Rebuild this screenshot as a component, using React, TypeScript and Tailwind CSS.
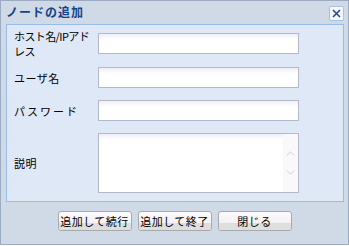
import { ChevronUp, ChevronDown } from 'lucide-react'

const font = { fontFamily: '"Noto Sans CJK JP", "Liberation Sans", sans-serif' }

function Field() {
  return (
    <div className="h-[21px] w-[201px] shrink-0 border border-[#b5b8c8] bg-gradient-to-b from-[#f0eef6] via-white via-[30%] to-white" />
  )
}

function Btn({ label }: { label: string }) {
  return (
    <button
      type="button"
      className="relative h-[20px] w-[74px] overflow-hidden rounded-[3px] border border-[#a9a9a9] bg-gradient-to-b from-[#fbf9fb] via-[#f6f3f6] via-[50%] to-[#f4f1f4] text-[11px] leading-[18px] tracking-[0.5px] text-black"
    >
      <span className="absolute inset-x-0 bottom-0 h-[7px] bg-[#dedede]" />
      <span className="relative">{label}</span>
    </button>
  )
}

export default function App() {
  return (
    <div style={font} className="h-[246px] w-[349px] bg-white">
      <div className="flex h-[245px] w-[349px] flex-col border border-[#9aabc2] bg-[#cfdae6]">
        <div className="flex h-[23px] items-start justify-between pl-[5px] pr-[4px] pt-[3px]">
          <span className="text-[12px] font-bold leading-[16px] tracking-[1px] text-[#15428b]">ノードの追加</span>
          <button
            type="button"
            className="mt-[2px] flex h-[15px] w-[15px] items-center justify-center rounded-[2px] border border-[#a9c2e4] bg-[#f4f8fd]"
          >
            <svg width="11" height="11" viewBox="0 0 11 11">
              <path d="M2 2 L9 9 M9 2 L2 9" stroke="#2a4b86" strokeWidth="1.6" />
            </svg>
          </button>
        </div>
        <div className="ml-[5px] h-[178px] w-[338px] border border-[#99bbe8] bg-[#dfe8f6] pl-[7px] pt-[8px]">
          <div className="flex flex-col text-[11px] leading-[14px] text-black">
            <div className="flex h-[21px] items-center">
              <div className="w-[84px] leading-[15px] tracking-[-0.6px]">
                <div>ホスト名/IPアド</div>
                <div>レス</div>
              </div>
              <Field />
            </div>
            <div className="mt-[13px] flex h-[21px] items-center">
              <div className="w-[84px] tracking-[0.5px]">ユーザ名</div>
              <Field />
            </div>
            <div className="mt-[12px] flex h-[21px] items-center">
              <div className="w-[84px] tracking-[2px]">パスワード</div>
              <Field />
            </div>
            <div className="mt-[12px] flex items-center">
              <div className="w-[84px] tracking-[0.5px]">説明</div>
              <div className="flex h-[60px] w-[201px] border border-[#b5b8c8] bg-gradient-to-b from-[#f0eef6] via-white via-[10%] to-white">
                <div className="flex-1" />
                <div className="flex w-[15px] flex-col items-center justify-center gap-[6px] bg-[#fbf8fc] text-[#c4c4c4]">
                  <ChevronUp size={13} strokeWidth={1.5} />
                  <ChevronDown size={13} strokeWidth={1.5} />
                </div>
              </div>
            </div>
          </div>
        </div>
        <div className="mt-[9px] flex justify-center gap-[6px]">
          <Btn label="追加して続行" />
          <Btn label="追加して終了" />
          <Btn label="閉じる" />
        </div>
      </div>
    </div>
  )
}
